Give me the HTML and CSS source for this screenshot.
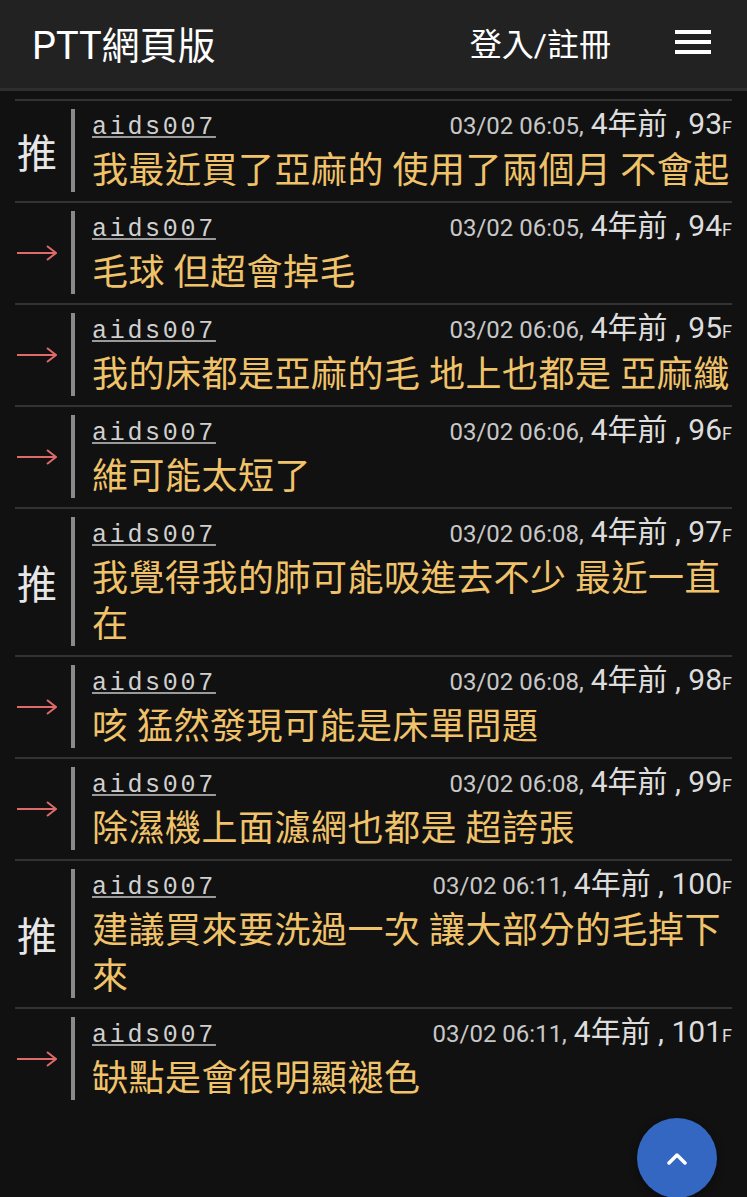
FILE: index.html
```html
<!DOCTYPE html>
<html lang="zh-Hant">
<head>
    <meta charset="UTF-8">
    <meta name="viewport" content="width=device-width, initial-scale=1.0">
    <title>PTT網頁版</title>
    <link rel="stylesheet" href="styles.css">
</head>
<body>
    <div class="header">
        <div class="title">PTT網頁版</div>
        <div class="login">登入/註冊</div>
        <div class="menu"><span></span><span></span><span></span></div>
    </div>

    <div class="list">
        <div class="comment">
            <div class="tag">推</div>
            <div class="body">
                <div class="meta"><span class="user">aids007</span><span class="when"><span class="time">03/02 06:05,</span> <span class="ago">4年前 , 93<small>F</small></span></span></div>
                <div class="text">我最近買了亞麻的 使用了兩個月 不會起</div>
            </div>
        </div>
        <div class="comment">
            <div class="tag"><svg class="arrow" width="40" height="16" viewBox="0 0 40 16"><path d="M0 8H39M30 1L39 8L30 15"/></svg></div>
            <div class="body">
                <div class="meta"><span class="user">aids007</span><span class="when"><span class="time">03/02 06:05,</span> <span class="ago">4年前 , 94<small>F</small></span></span></div>
                <div class="text">毛球 但超會掉毛</div>
            </div>
        </div>
        <div class="comment">
            <div class="tag"><svg class="arrow" width="40" height="16" viewBox="0 0 40 16"><path d="M0 8H39M30 1L39 8L30 15"/></svg></div>
            <div class="body">
                <div class="meta"><span class="user">aids007</span><span class="when"><span class="time">03/02 06:06,</span> <span class="ago">4年前 , 95<small>F</small></span></span></div>
                <div class="text">我的床都是亞麻的毛 地上也都是 亞麻纖</div>
            </div>
        </div>
        <div class="comment">
            <div class="tag"><svg class="arrow" width="40" height="16" viewBox="0 0 40 16"><path d="M0 8H39M30 1L39 8L30 15"/></svg></div>
            <div class="body">
                <div class="meta"><span class="user">aids007</span><span class="when"><span class="time">03/02 06:06,</span> <span class="ago">4年前 , 96<small>F</small></span></span></div>
                <div class="text">維可能太短了</div>
            </div>
        </div>
        <div class="comment">
            <div class="tag">推</div>
            <div class="body">
                <div class="meta"><span class="user">aids007</span><span class="when"><span class="time">03/02 06:08,</span> <span class="ago">4年前 , 97<small>F</small></span></span></div>
                <div class="text">我覺得我的肺可能吸進去不少 最近一直在</div>
            </div>
        </div>
        <div class="comment">
            <div class="tag"><svg class="arrow" width="40" height="16" viewBox="0 0 40 16"><path d="M0 8H39M30 1L39 8L30 15"/></svg></div>
            <div class="body">
                <div class="meta"><span class="user">aids007</span><span class="when"><span class="time">03/02 06:08,</span> <span class="ago">4年前 , 98<small>F</small></span></span></div>
                <div class="text">咳 猛然發現可能是床單問題</div>
            </div>
        </div>
        <div class="comment">
            <div class="tag"><svg class="arrow" width="40" height="16" viewBox="0 0 40 16"><path d="M0 8H39M30 1L39 8L30 15"/></svg></div>
            <div class="body">
                <div class="meta"><span class="user">aids007</span><span class="when"><span class="time">03/02 06:08,</span> <span class="ago">4年前 , 99<small>F</small></span></span></div>
                <div class="text">除濕機上面濾網也都是 超誇張</div>
            </div>
        </div>
        <div class="comment">
            <div class="tag">推</div>
            <div class="body">
                <div class="meta"><span class="user">aids007</span><span class="when"><span class="time">03/02 06:11,</span> <span class="ago">4年前 , 100<small>F</small></span></span></div>
                <div class="text">建議買來要洗過一次 讓大部分的毛掉下來</div>
            </div>
        </div>
        <div class="comment">
            <div class="tag"><svg class="arrow" width="40" height="16" viewBox="0 0 40 16"><path d="M0 8H39M30 1L39 8L30 15"/></svg></div>
            <div class="body">
                <div class="meta"><span class="user">aids007</span><span class="when"><span class="time">03/02 06:11,</span> <span class="ago">4年前 , 101<small>F</small></span></span></div>
                <div class="text">缺點是會很明顯褪色</div>
            </div>
        </div>
    </div>

    <button class="to-top" aria-label="top">
        <svg width="20" height="13" viewBox="0 0 20 13"><path d="M2 11L10 3L18 11"/></svg>
    </button>
</body>
</html>
```

FILE: styles.css
```css
body {
    margin: 0;
    background-color: #111111;
    font-family: Roboto, "Noto Sans CJK TC", sans-serif;
    color: #dddddd;
}
.header {
    display: flex;
    align-items: center;
    box-sizing: border-box;
    height: 91px;
    padding: 0 36px 4px 32px;
    background-color: #222222;
    border-bottom: 3px solid #2f2f2f;
}
.title {
    flex: 1;
    font-size: 38px;
    color: #ffffff;
}
.login {
    font-size: 32px;
    color: #ffffff;
    margin-right: 64px;
}
.menu {
    width: 36px;
    display: flex;
    flex-direction: column;
    gap: 6px;
}
.menu span {
    height: 4px;
    background: #ffffff;
}
.list {
    margin: 8px 15px 0;
}
.comment {
    display: flex;
    border-top: 2px solid #333333;
    padding: 8px 0 9px;
}
.tag {
    width: 44px;
    margin-right: 12px;
    display: flex;
    align-items: center;
    justify-content: center;
    font-family: "Noto Sans CJK TC", sans-serif;
    font-size: 40px;
    color: #e6e6e6;
}
.arrow path {
    fill: none;
    stroke: #de6a6a;
    stroke-width: 2;
}
.body {
    flex: 1;
    min-width: 0;
    border-left: 4px solid #8a8a8a;
    padding: 0 0 2px 17px;
}
.meta {
    display: flex;
    align-items: baseline;
    justify-content: space-between;
    height: 32px;
    margin-bottom: 3px;
    line-height: 1;
}
.user {
    font-family: "Liberation Mono", monospace;
    font-size: 25px;
    letter-spacing: 2.7px;
    color: #d0d0d0;
    text-decoration: underline;
    text-decoration-color: #9a9a9a;
    text-decoration-thickness: 2px;
    text-underline-offset: 2px;
}
.time {
    font-size: 24px;
    color: #c8c8c8;
    margin-right: 3px;
}
.ago {
    font-size: 30px;
    color: #dddddd;
}
.ago small {
    font-size: 18px;
}
.text {
    font-family: "Noto Sans CJK TC", sans-serif;
    font-size: 36px;
    letter-spacing: 0.5px;
    line-height: 46px;
    color: #f0c36a;
}
.to-top {
    position: fixed;
    right: 30px;
    bottom: -1px;
    width: 80px;
    height: 80px;
    border: none;
    border-radius: 50%;
    background-color: #3467c2;
    box-shadow: 0 2px 8px rgba(0, 0, 0, 0.4);
    display: flex;
    align-items: center;
    justify-content: center;
    padding: 0;
}
.to-top path {
    fill: none;
    stroke: #ffffff;
    stroke-width: 3.5;
    stroke-linecap: round;
    stroke-linejoin: round;
}
```
